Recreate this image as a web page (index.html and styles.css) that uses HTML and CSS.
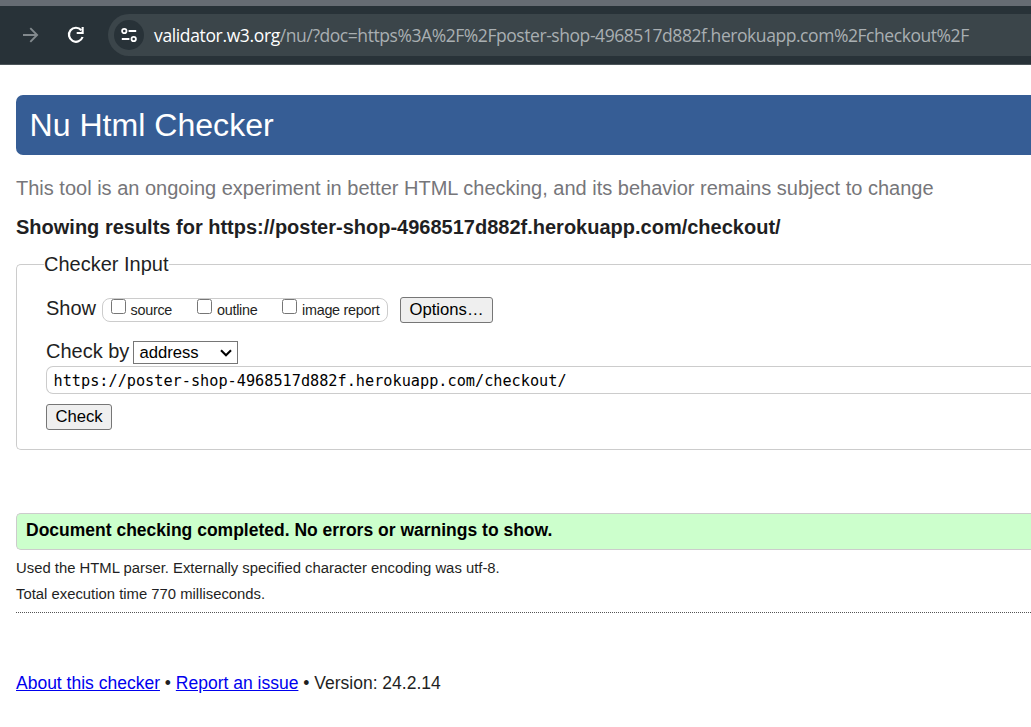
FILE: index.html
```html
<!DOCTYPE html>
<html lang="en">
<head>
<meta charset="utf-8">
<title>Nu Html Checker</title>
<link rel="stylesheet" href="styles.css">
</head>
<body>
<div class="browser">
  <svg class="forward" width="16" height="16" viewBox="0 0 16 16"><path d="M0 8H14M7.3 1.2L14.1 8L7.3 14.8" fill="none" stroke="#82898d" stroke-width="1.9"/></svg>
  <svg class="reload" width="18" height="18" viewBox="0 0 18 18"><path d="M14.3 4.2A7 7 0 1 0 15.6 11" fill="none" stroke="#fff" stroke-width="2.2"/><path d="M16.7 1V8H9.7V5.9H14.6V1Z" fill="#fff"/></svg>
  <div class="omnibox">
    <span class="site-info"><svg width="16" height="16" viewBox="0 0 16 16" fill="none" stroke="#fff" stroke-width="1.8"><circle cx="3.3" cy="4" r="2.2"/><path d="M7.6 4H15.2M.8 12H8.4"/><circle cx="12.7" cy="12" r="2.2"/></svg></span>
    <span class="url"><span class="host">validator.w3.org</span><span class="path">/nu/?doc=https%3A%2F%2Fposter-shop-4968517d882f.herokuapp.com%2Fcheckout%2F</span></span>
  </div>
</div>
<main class="page">
  <h1 class="title">Nu Html Checker</h1>
  <p class="notice">This tool is an ongoing experiment in better HTML checking, and its behavior remains subject to change</p>
  <h2 class="results">Showing results for https://poster-shop-4968517d882f.herokuapp.com/checkout/</h2>
  <fieldset class="input">
    <legend class="legend">Checker Input</legend>
    <div class="show-row">
      <span class="label">Show</span>
      <div class="toggles">
        <label class="toggle source"><input class="box" type="checkbox"><span>source</span></label>
        <label class="toggle outline"><input class="box" type="checkbox"><span>outline</span></label>
        <label class="toggle"><input class="box" type="checkbox"><span>image report</span></label>
      </div>
      <button class="button options">Options…</button>
    </div>
    <div class="by-row">
      <span class="label">Check by</span>
      <div class="select"><span>address</span><svg width="12" height="8" viewBox="0 0 12 8"><path d="M1 1.2L6 6.2L11 1.2" fill="none" stroke="#000" stroke-width="2.1"/></svg></div>
    </div>
    <div class="address">https://poster-shop-4968517d882f.herokuapp.com/checkout/</div>
    <button class="button check">Check</button>
  </fieldset>
  <p class="success">Document checking completed. No errors or warnings to show.</p>
  <p class="detail">Used the HTML parser. Externally specified character encoding was utf-8.</p>
  <p class="detail">Total execution time 770 milliseconds.</p>
  <hr class="rule">
  <p class="about"><a href="#">About this checker</a> • <a href="#">Report an issue</a> • Version: 24.2.14</p>
</main>
</body>
</html>
```
FILE: styles.css
```css
* { box-sizing: border-box; }
body {
  margin: 0;
  height: 727px;
  overflow: hidden;
  background: #fff;
  color: #1f1f23;
  font-family: "Liberation Sans", Arial, sans-serif;
}
.browser {
  display: flex;
  align-items: center;
  height: 65px;
  padding-left: 23px;
  border-top: 6px solid #666c73;
  border-bottom: 1px solid #4c555a;
  background: #283238;
}
.forward { flex: none; margin-right: 28px; }
.reload { flex: none; margin-right: 23px; }
.omnibox {
  display: flex;
  align-items: center;
  flex: 1;
  height: 42px;
  padding-left: 6px;
  border-radius: 21px 0 0 21px;
  background: #3b454a;
}
.site-info {
  display: flex;
  align-items: center;
  justify-content: center;
  width: 30px;
  height: 30px;
  margin-right: 10px;
  border-radius: 50%;
  background: #283238;
}
.url {
  font-family: "Open Sans", "Noto Sans", sans-serif;
  font-size: 17.5px;
  line-height: 24px;
  white-space: nowrap;
}
.host { color: #fff; letter-spacing: -0.36px; }
.path { color: #a9afb2; letter-spacing: -0.44px; }
.page { padding: 30px 0 0 16px; white-space: nowrap; }
.title {
  height: 60px;
  margin: 0;
  padding-left: 13.5px;
  border-radius: 7px 0 0 7px;
  background: #365d95;
  color: #fff;
  font-size: 32.1px;
  font-weight: 400;
  line-height: 60px;
}
.notice { margin: 21px 0 0; color: #76767a; font-size: 20px; line-height: 24px; }
.results { margin: 15px 0 0; font-size: 20px; line-height: 24px; }
.input {
  height: 198px;
  min-width: 0;
  margin: 13px 0 0;
  padding: 20px 0 0 29px;
  border: 1px solid #ccc;
  border-right: 0;
  border-radius: 5px 0 0 5px;
}
.legend { margin-left: -2px; padding: 0; font-size: 20px; line-height: 24px; }
.label { font-size: 20px; line-height: 24px; }
.show-row { display: flex; align-items: flex-start; height: 43px; }
.toggles {
  display: flex;
  width: 286px;
  height: 24px;
  margin: 2px 12px 0 6px;
  padding-left: 7px;
  border: 1px solid #ccc;
  border-radius: 8px;
}
.toggle { display: flex; font-size: 14.4px; letter-spacing: -0.28px; line-height: 23px; }
.source { width: 87px; }
.outline { width: 85px; }
.box { width: 15px; height: 15px; margin: 0 5px 0 0; }
.toggle:first-child .box { margin-left: 0.5px; }
.button {
  height: 26px;
  padding: 0;
  border: 1px solid #767676;
  border-radius: 3px;
  background: #efefef;
  color: #000;
  font: 16.67px/24px "Liberation Sans", Arial, sans-serif;
}
.options { width: 93px; margin-top: 1px; }
.by-row { display: flex; height: 27px; }
.select {
  display: flex;
  align-items: center;
  justify-content: space-between;
  width: 105px;
  height: 23px;
  margin: 2px 0 0 4px;
  padding: 0 5px;
  border: 1px solid #767676;
  color: #000;
  font-size: 16.67px;
}
.address {
  height: 28px;
  padding-left: 6.5px;
  border: 1px solid #ccc;
  border-right: 0;
  border-radius: 7px 0 0 7px;
  color: #000;
  font: 15.22px/28px "DejaVu Sans Mono", monospace;
}
.check { display: block; width: 66px; margin-top: 10px; }
.success {
  height: 37px;
  margin: 63px 0 5px;
  padding-left: 9px;
  border: 1px solid #ccc;
  border-right: 0;
  border-radius: 5px 0 0 5px;
  background: #cfc;
  color: #000;
  font-size: 17.5px;
  font-weight: 700;
  line-height: 33px;
}
.detail { margin: 0; font-size: 14.85px; line-height: 26px; }
.rule { margin: 5px 0 0; border: 0; border-top: 1px dotted #555; }
.about { margin: 58px 0 0; font-size: 17.5px; line-height: 24px; }
.about a { color: #00e; }
```
